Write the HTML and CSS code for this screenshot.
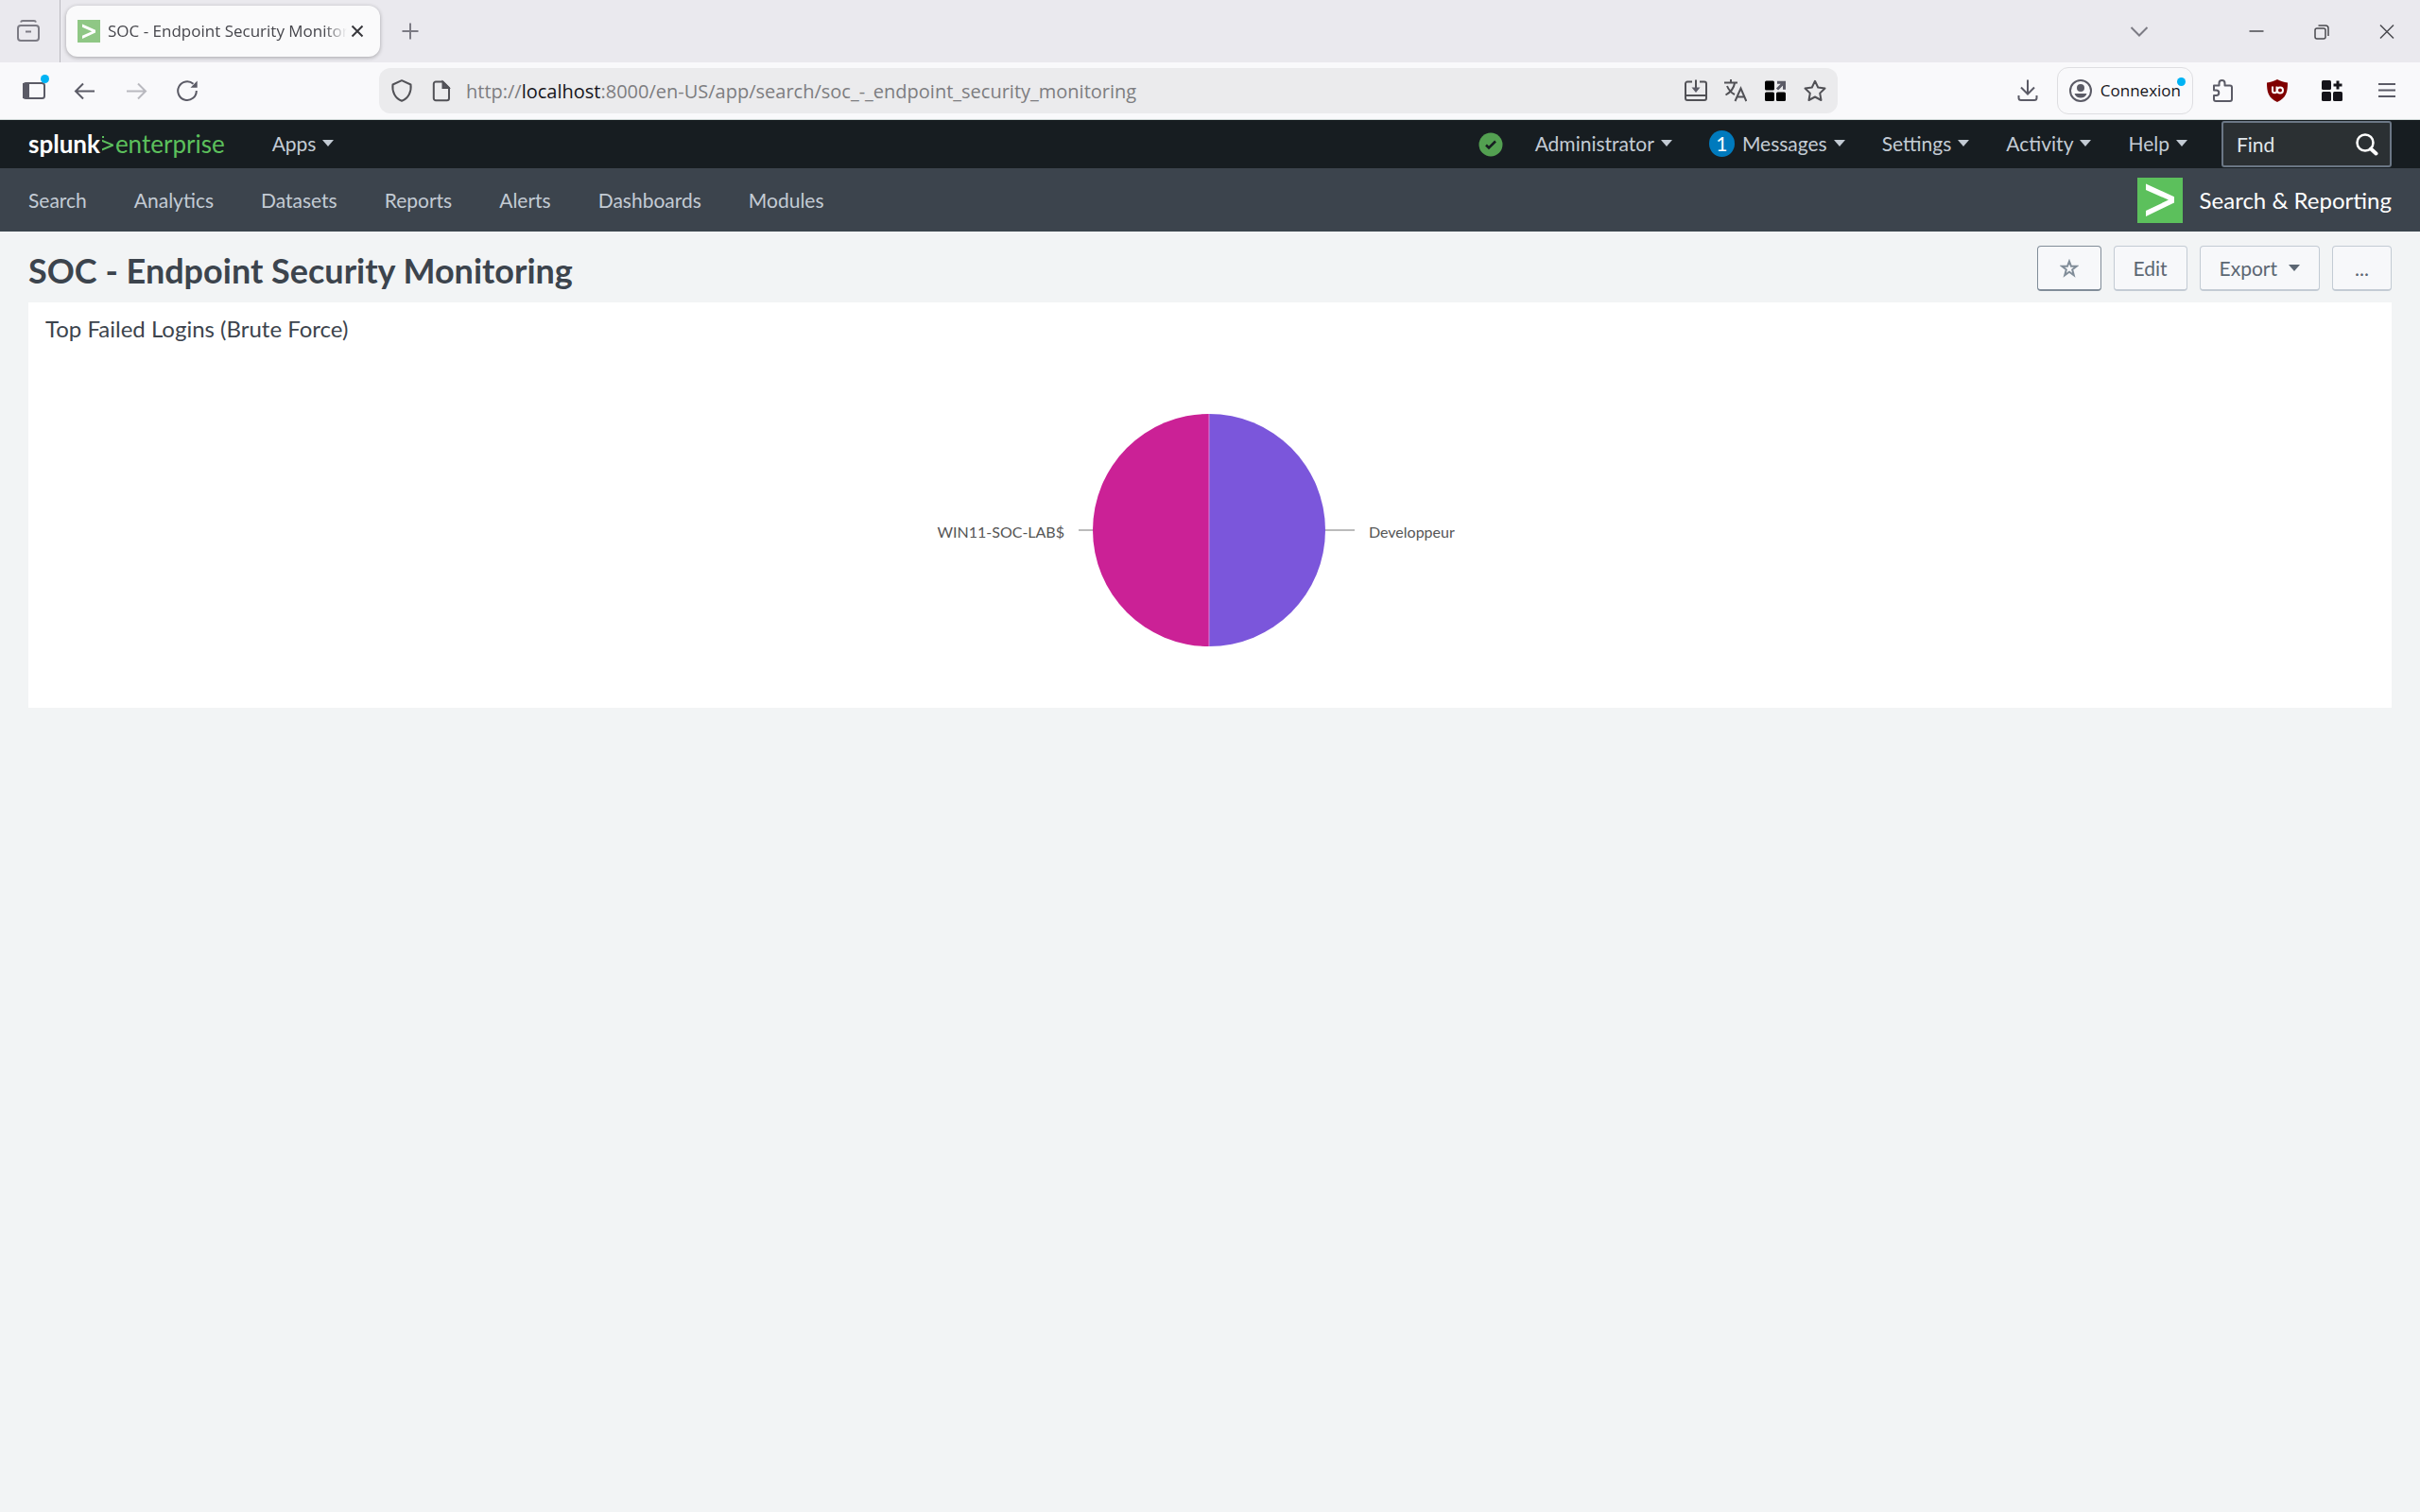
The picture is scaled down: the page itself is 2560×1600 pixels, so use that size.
FILE: index.html
```html
<!DOCTYPE html>
<html lang="en">
<head>
<meta charset="utf-8">
<title>SOC - Endpoint Security Monitoring</title>
<link rel="stylesheet" href="styles.css">
</head>
<body>
<div class="browser">
  <div class="tabstrip">
    <button class="icon-btn tabs-view" aria-label="View tabs"><svg class="icon" viewBox="0 0 24 24"><rect x="1" y="6" width="22" height="16" rx="3"/><path d="M4 2.500C4.500 1 5 1 6 1h12c1 0 1.500 0 2 1.500M9 12.500h6"/></svg></button>
    <div class="tab">
      <svg class="favicon" viewBox="0 0 24 24"><path class="fav-bg" d="M0 0h24v24H0z"/><path class="fill-white" d="M5 4.500l14 6.300v2.800L5 20v-3.200l10.200-4.600L5 7.700z"/></svg>
      <span class="tab-title">SOC - Endpoint Security Monitoring</span>
      <button class="icon-btn" aria-label="Close tab"><svg class="tab-close" viewBox="0 0 14 14"><path d="M1.500 1.500l11 11M12.500 1.500l-11 11"/></svg></button>
    </div>
    <button class="icon-btn new-tab" aria-label="New tab"><svg class="icon faint" viewBox="0 0 24 24"><path d="M12 3.500v17M3.500 12h17"/></svg></button>
    <div class="window-controls">
      <button class="icon-btn" aria-label="List tabs"><svg class="icon faint" viewBox="0 0 24 24"><path d="M3.500 8l8.500 8.500L20.500 8"/></svg></button>
      <button class="icon-btn win-first" aria-label="Minimize"><svg class="icon dark thin" viewBox="0 0 24 24"><path d="M4.500 12h15"/></svg></button>
      <button class="icon-btn" aria-label="Restore"><svg class="icon dark thin" viewBox="0 0 24 24"><rect x="5" y="9" width="11" height="11" rx="2"/><path d="M8.500 6h7.500a3 3 0 0 1 3 3v8"/></svg></button>
      <button class="icon-btn" aria-label="Close window"><svg class="icon dark thin" viewBox="0 0 24 24"><path d="M5 5.500l14 14M19 5.500l-14 14"/></svg></button>
    </div>
  </div>
  <div class="toolbar">
    <div class="nav-buttons">
      <button class="icon-btn badged" aria-label="Show sidebars"><svg class="icon" viewBox="0 0 24 24"><rect x="1" y="4" width="22" height="16" rx="2.500"/><path class="solid" d="M1 5h5v14H1z"/></svg></button>
      <button class="icon-btn" aria-label="Back"><svg class="icon" viewBox="0 0 24 24"><path d="M22 12.500H2.500M10 4.500l-8 8 8 8"/></svg></button>
      <button class="icon-btn" aria-label="Forward"><svg class="icon disabled" viewBox="0 0 24 24"><path d="M2 12.500h19.500M14 4.500l8 8-8 8"/></svg></button>
      <button class="icon-btn" aria-label="Reload"><svg class="icon" viewBox="0 0 24 24"><path d="M18.500 4.800A9.800 9.800 0 1 0 21.800 12"/><path class="solid-only" d="M22.700 1.500v7.200h-7.200z"/></svg></button>
    </div>
    <div class="urlbar">
      <svg class="icon url-dark" viewBox="0 0 24 24"><path d="M12 1.200L21.500 5.500C22.500 13 19 20 12 22.800 5 20 1.500 13 2.500 5.500z" stroke-linejoin="round"/></svg>
      <svg class="icon url-dark" viewBox="0 0 24 24"><path d="M6 2.500h7.500l6.500 6.500v11a2.200 2.200 0 0 1-2.200 2.200H6A2.200 2.200 0 0 1 3.800 20V4.700A2.200 2.200 0 0 1 6 2.500z"/><path class="solid" d="M13.500 3v6H19.500z"/></svg>
      <div class="url" role="textbox" aria-label="Address">http://<b>localhost</b>:8000/en-US/app/search/soc_-_endpoint_security_monitoring</div>
      <button class="icon-btn" aria-label="Save to device"><svg class="icon url-dark" viewBox="0 0 24 24"><path d="M8 2.500H3A2 2 0 0 0 1 4.500V20a2 2 0 0 0 2 2h18a2 2 0 0 0 2-2V4.500a2 2 0 0 0-2-2h-5M1 17h22M12 .5V11"/><path class="solid-only" d="M7.500 8.500h9L12 14z"/></svg></button>
      <button class="icon-btn" aria-label="Translate page"><svg class="icon url-dark" viewBox="0 0 24 24"><path d="M0 3.500h14M7 0v3.500M3 7c2 5 5 7.500 8 9M11 4C10 10 6 14 1.500 16.500M11.500 23L17.500 9.500 23.300 23M13.500 18.500h8"/></svg></button>
      <button class="icon-btn" aria-label="Open extension panel"><svg class="icon" viewBox="0 0 24 24"><g class="fill-black"><rect x="1" y="1.500" width="10" height="10" rx="1.500"/><rect x="1" y="13.500" width="10" height="9.500" rx="1.500"/><rect x="13" y="13.500" width="10" height="9.500" rx="1.500"/></g><path class="arrow" d="M14 10.500l7-7M14 3.200h7.500v7.500"/></svg></button>
      <button class="icon-btn" aria-label="Bookmark"><svg class="icon url-dark" viewBox="0 0 24 24"><path stroke-linejoin="round" d="M12 1.800l3.200 6.700 7.300 1-5.300 5.100 1.300 7.400L12 18.500 5.500 22l1.300-7.400L1.500 9.500l7.300-1z"/></svg></button>
    </div>
    <div class="tools">
      <button class="icon-btn" aria-label="Downloads"><svg class="icon" viewBox="0 0 24 24"><path d="M12 .5v15M5 8.500l7 7 7-7M2.500 17v2.500A2.500 2.500 0 0 0 5 22h14a2.500 2.500 0 0 0 2.500-2.500V17"/></svg></button>
      <button class="account badged"><svg class="icon" viewBox="0 0 24 24"><circle cx="12" cy="12" r="11"/><circle class="solid-only" cx="12" cy="9" r="4"/><path class="solid-only" d="M5.500 15h13c-1 3-3.500 4.500-6.500 4.500S6.500 18 5.500 15z"/></svg>Connexion</button>
      <button class="icon-btn" aria-label="Extensions"><svg class="icon" viewBox="0 0 24 24"><path stroke-linejoin="round" d="M3 6.500h5.500V4a3 3 0 0 1 6 0v2.500h5.500a2 2 0 0 1 2 2V21a2 2 0 0 1-2 2H5a2 2 0 0 1-2-2v-4h2.500a2.700 2.700 0 0 0 0-5.500H3z"/></svg></button>
      <button class="icon-btn" aria-label="uBlock Origin"><svg class="icon" viewBox="0 0 24 24"><path class="ublock" d="M12 0c3.500 2 7 3 11 3.500 0 10-1.500 16-11 20.500C2.500 19.500 1 13.500 1 3.500 5 3 8.500 2 12 0z"/><path class="ublock-mark" d="M7 7.500V12a2 2 0 0 0 4.500 0V7.500M11.500 12.500v2"/><circle class="ublock-mark" cx="15" cy="11.500" r="3"/></svg></button>
      <button class="icon-btn" aria-label="Add-on grid"><svg class="icon" viewBox="0 0 24 24"><g class="fill-ink"><rect x="1" y="1" width="10" height="10" rx="1.500"/><rect x="1" y="13" width="10" height="10" rx="1.500"/><rect x="13" y="13" width="10" height="10" rx="1.500"/></g><path class="plus" d="M18 1.500v9M13.500 6h9"/></svg></button>
      <button class="icon-btn" aria-label="Open menu"><svg class="icon" viewBox="0 0 24 24"><path d="M3 5h18M3 11.500h18M3 18h18"/></svg></button>
    </div>
  </div>
</div>

<header>
  <div class="appbar">
    <a class="logo" href="#"><b>splunk</b><svg class="logo-mark" viewBox="0 0 14 20"><path d="M1 5.800l12 5v1.600l-12 5.200v-2.300l9-3.700-9-3.500zM1 2h2v2H1z"/></svg><span>enterprise</span></a>
    <button class="menu apps">Apps<i class="caret"></i></button>
    <nav class="menus">
      <svg class="status" viewBox="0 0 26 26"><circle cx="13" cy="13" r="12.500"/><path d="M8 13.500l3 3 7-7"/></svg>
      <button class="menu">Administrator<i class="caret"></i></button>
      <button class="menu"><span class="count">1</span>Messages<i class="caret"></i></button>
      <button class="menu">Settings<i class="caret"></i></button>
      <button class="menu">Activity<i class="caret"></i></button>
      <button class="menu">Help<i class="caret"></i></button>
    </nav>
    <div class="find">
      <input type="text" placeholder="Find" aria-label="Find">
      <svg class="search-icon" viewBox="0 0 24 24"><circle cx="10" cy="10" r="8.500"/><path d="M16 16.500l5.500 5"/></svg>
    </div>
  </div>
  <div class="subnav">
    <nav class="links">
      <a href="#">Search</a><a href="#">Analytics</a><a href="#">Datasets</a><a href="#">Reports</a><a href="#">Alerts</a><a href="#">Dashboards</a><a href="#">Modules</a>
    </nav>
    <a class="app-name" href="#"><svg class="app-icon" viewBox="0 0 48 48"><path class="app-bg" d="M0 0h48v48H0z"/><path class="fill-white" d="M9 6.500l30 13.800v6.200L9 41v-6l24-11.500L9 13z"/></svg>Search &amp; Reporting</a>
  </div>
</header>

<main>
  <div class="page-head">
    <h1>SOC - Endpoint Security Monitoring</h1>
    <div class="actions">
      <button class="btn btn-star" aria-label="Favorite"><svg class="star" viewBox="0 0 20 20"><path d="M10 2.500l2 5.300h5.700L13.200 11.300l1.600 5.900L10 13.800l-4.800 3.400 1.600-5.900L2.300 7.800H8z"/></svg></button>
      <button class="btn">Edit</button>
      <button class="btn">Export<i class="caret"></i></button>
      <button class="btn">...</button>
    </div>
  </div>
  <section class="panel">
    <h2>Top Failed Logins (Brute Force)</h2>
    <div class="chart">
      <span class="label label-left">WIN11-SOC-LAB$</span>
      <svg class="pie" viewBox="0 0 292 248" role="img" aria-label="Top failed logins by account">
        <path class="lead" d="M0 124h20M260 124h32"/>
        <path class="slice-b" d="M138 1a123 123 0 0 0 0 246z"/>
        <path class="slice-a" d="M138 1a123 123 0 0 1 0 246z"/>
        <path class="split" d="M138 1v246"/>
      </svg>
      <span class="label">Developpeur</span>
    </div>
  </section>
</main>
</body>
</html>
```
FILE: styles.css
```css
* { box-sizing: border-box; }

body {
  margin: 0;
  min-height: 100vh;
  background: #f2f4f5;
  color: #3c444d;
  font: 21px/30px Lato, "Liberation Sans", sans-serif;
}

button {
  margin: 0;
  padding: 0;
  border: 0;
  background: none;
  color: inherit;
  font: inherit;
  display: flex;
  align-items: center;
}

a { color: inherit; text-decoration: none; }
svg { display: block; flex: none; }

/* Browser chrome */
.browser {
  font: 17px/24px "Open Sans", "Noto Sans", sans-serif;
  border-bottom: 1px solid #d2dad9;
}
.icon {
  width: 24px;
  height: 24px;
  fill: none;
  stroke: #5b5b66;
  stroke-width: 2;
}
.icon.faint, .tabs-view .icon { stroke: #7c7b84; }
.icon.dark { stroke: #4a4a4f; }
.icon.thin { stroke-width: 1.5; }
.icon.url-dark { stroke: #515156; }
.icon.disabled { stroke: #b9b9bf; }
.icon .solid { fill: #5b5b66; }
.icon .solid-only { fill: #5b5b66; stroke: none; }
.fill-white { fill: #fff; }
.fill-black { fill: #000; stroke: none; }
.fill-ink { fill: #15141a; stroke: none; }
.icon .arrow { stroke-width: 3; }
.icon .plus { stroke: #15141a; stroke-width: 3; }
.ublock { fill: #800000; stroke: none; }
.ublock-mark { stroke: #fff; }

.tabstrip {
  display: flex;
  align-items: center;
  height: 66px;
  background: #eae9ee;
}
.tabs-view {
  align-self: stretch;
  width: 64px;
  padding-left: 18px;
  border-right: 1px solid #bbbac0;
}
.tab {
  display: flex;
  align-items: center;
  width: 332px;
  height: 54px;
  margin-left: 6px;
  padding: 0 17px 0 12px;
  border-radius: 12px;
  background: #fafafb;
  box-shadow: 0 1px 4px rgba(0, 0, 0, .3);
  color: #46464c;
}
.favicon { width: 24px; height: 24px; margin-right: 8px; }
.fav-bg { fill: #8fc785; }
.tab-title {
  flex: 1;
  min-width: 0;
  overflow: hidden;
  white-space: nowrap;
  mask-image: linear-gradient(to left, transparent, #000 24px);
}
.tab-close { width: 14px; height: 14px; margin-left: 4px; stroke: #38383d; stroke-width: 2; }
.new-tab { margin-left: 20px; }
.window-controls { display: flex; margin-left: auto; padding-right: 23px; gap: 45px; }
.win-first { margin-left: 55px; }

.toolbar {
  display: flex;
  align-items: center;
  height: 60px;
  padding: 0 23px 0 24px;
  background: #f9f9fb;
}
.nav-buttons { display: flex; gap: 30px; }
.badged { position: relative; }
.badged::after {
  content: "";
  position: absolute;
  top: -5px;
  right: -4px;
  width: 9px;
  height: 9px;
  border-radius: 50%;
  background: #00b3f4;
}
.urlbar {
  flex: 1;
  display: flex;
  align-items: center;
  gap: 18px;
  height: 48px;
  margin: 0 189px 0 191px;
  padding: 0 12px;
  border-radius: 12px;
  background: #ebebed;
}
.url {
  flex: 1;
  margin-left: -4px;
  padding-top: 2px;
  color: #7d7d80;
  font-size: 20px;
  white-space: nowrap;
}
.url b { color: #15141a; font-weight: 400; }
.tools { display: flex; align-items: center; gap: 34px; }
.account {
  gap: 9px;
  height: 50px;
  margin: 0 -15px;
  padding: 0 12px;
  border: 1px solid #dedee1;
  border-radius: 12px;
  color: #15141a;
}
.account.badged::after { top: 10px; right: 7px; }

/* Splunk bars */
.appbar {
  display: flex;
  align-items: center;
  height: 51px;
  padding: 0 30px;
  background: #171d21;
  color: #c3cbd4;
}
.menu, .logo { padding-bottom: 2px; }
.logo {
  display: flex;
  align-items: center;
  font-size: 26px;
  color: #5cc05c;
}
.logo b { color: #fff; }
.logo-mark { width: 14px; height: 20px; margin: 0 1px; fill: #5cc05c; }
.caret {
  margin-left: 7px;
  border: solid transparent;
  border-width: 7px 6px 0;
  border-top-color: currentColor;
}
.apps { margin-left: 50px; }
.menus { display: flex; align-items: center; gap: 39px; margin-left: auto; }
.status { width: 26px; height: 26px; margin-right: -5px; fill: #53a051; }
.status path { fill: none; stroke: #171d21; stroke-width: 2.5; }
.count {
  width: 27px;
  height: 28px;
  margin-right: 8px;
  border-radius: 50%;
  background: #007abd;
  color: #fff;
  line-height: 28px;
  text-align: center;
}
.find {
  display: flex;
  align-items: center;
  width: 180px;
  height: 49px;
  margin-left: 36px;
  padding: 0 12px 0 14px;
  border: 2px solid #6b7785;
  border-radius: 3px;
  background: #2b3033;
}
.find input {
  flex: 1;
  min-width: 0;
  padding: 0;
  border: 0;
  outline: 0;
  background: none;
  color: #e1e6eb;
  font: inherit;
}
.find input::placeholder { color: #e1e6eb; opacity: 1; }
.search-icon { width: 24px; height: 24px; fill: none; stroke: #fff; stroke-width: 2.5; stroke-linecap: round; }
.search-icon path { stroke-width: 4; }

.subnav {
  display: flex;
  align-items: center;
  justify-content: space-between;
  height: 67px;
  padding: 0 30px;
  background: #3c444d;
  color: #c3cbd4;
}
.links { display: flex; gap: 50px; }
.app-name { display: flex; align-items: center; gap: 18px; color: #fff; font-size: 24px; }
.app-icon { width: 48px; height: 48px; }
.app-bg { fill: #5cc05c; }

/* Dashboard */
main { padding: 15px 30px; }
.page-head { display: flex; justify-content: space-between; height: 60px; }
h1 { margin: 4px 0 0; font-size: 36px; line-height: 44px; font-weight: 700; }
.actions { display: flex; gap: 13px; }
.btn {
  justify-content: center;
  min-width: 63px;
  height: 48px;
  padding: 0 20px;
  border: 1px solid #c3cbd4;
  border-bottom-width: 2px;
  border-radius: 4px;
  background: #f7f8fa;
  color: #5c6773;
}
.btn-star { width: 68px; border-color: #818d99; }
.btn .caret { margin-left: 12px; }
.star { width: 20px; height: 20px; fill: none; stroke: #818d99; stroke-width: 2; }
.panel { padding: 12px 18px 64px; background: #fff; }
h2 { margin: 0; font-size: 24px; line-height: 32px; font-weight: 400; }
.chart {
  display: grid;
  grid-template-columns: 1fr 292px 1fr;
  align-items: center;
  gap: 15px;
  margin-top: 73px;
  padding-left: 14px;
  color: #555;
  font-size: 16px;
}
.label { padding-top: 4px; }
.label-left { text-align: right; }
.pie { width: 292px; height: 248px; }
.lead { stroke: #bbb; stroke-width: 2; }
.slice-a { fill: #7b56db; }
.slice-b { fill: #cb2196; }
.split { stroke: #dc7fd6; }
```
